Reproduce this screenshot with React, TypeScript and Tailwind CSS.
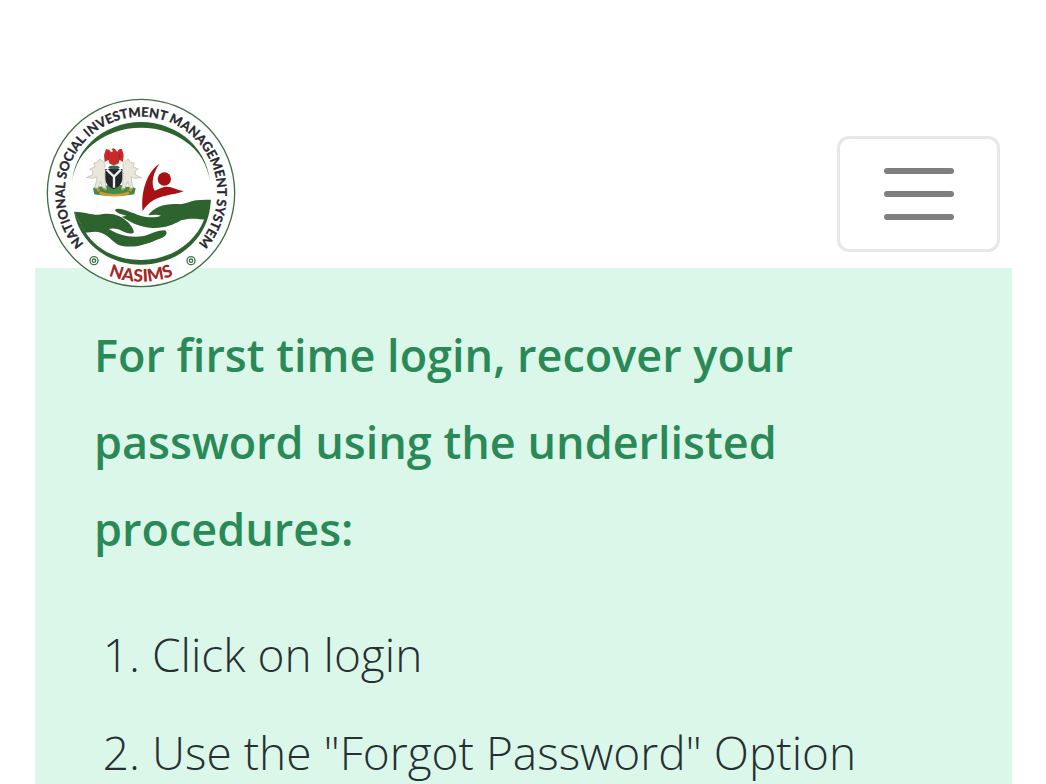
const steps: string[] = ['Click on login', 'Use the "Forgot Password" Option']

function NasimsLogo() {
  return (
    <svg
      className="block h-[190px] w-[190px]"
      viewBox="19 25 570 570"
      role="img"
      aria-label="National Social Investment Management System"
    >
      <defs>
        <path id="ring-top" d="M142 472 A229 229 0 1 1 466 472" />
        <path id="ring-bottom" d="M110 492 A266 266 0 0 0 498 492" />
      </defs>

      <circle cx="304" cy="310" r="281" fill="#fff" stroke="#3f6f45" strokeWidth="4" />

      {/* Ring lettering */}
      <text
        className="font-[Lato,sans-serif] text-[39px] font-bold"
        fill="#26282f"
        stroke="#26282f"
        strokeWidth="1"
        textAnchor="middle"
      >
        <textPath href="#ring-top" startOffset="50%">
          NATIONAL SOCIAL INVESTMENT MANAGEMENT SYSTEM
        </textPath>
      </text>
      <text
        className="font-[Lato,sans-serif] text-[52px] font-black"
        fill="#a5281f"
        textAnchor="middle"
      >
        <textPath href="#ring-bottom" startOffset="50%">
          NASIMS
        </textPath>
      </text>
      <g fill="none" stroke="#41744a" strokeWidth="4">
        <circle cx="163" cy="513" r="12" />
        <circle cx="163" cy="513" r="5" />
        <circle cx="454" cy="513" r="12" />
        <circle cx="454" cy="513" r="5" />
      </g>

      {/* Inner crescents */}
      <g fill="#2c632e">
        <path d="M97 290 A207 193 0 0 1 511 290 A207 176 0 0 0 97 290Z" />
        <path d="M103 367 L137 427 C170 480 230 511 304 511 C390 511 465 462 493 390 L513 330 C512 440 420 525 304 525 C205 525 120 460 103 367Z" />
      </g>

      {/* Hands */}
      <g fill="#2c632e">
        <path d="M103 366 C140 367 165 380 190 373 C222 369 244 379 258 392 C272 403 281 416 283 428 C276 437 254 428 236 419 C226 416 217 415 207 418 C234 435 272 446 312 439 C335 433 356 421 376 422 C388 430 376 443 358 448 C328 460 300 474 252 470 C222 466 212 438 184 429 C164 423 150 429 137 429Z" />
        <path d="M226 360 C238 352 268 366 293 375 C320 384 344 386 364 378 C352 374 340 376 326 377 C340 352 378 341 412 343 C432 345 444 339 455 335 C473 329 492 331 514 330 L501 391 C478 387 446 384 424 392 C398 408 366 418 330 414 C292 410 268 394 246 381 C253 380 257 379 260 378 C246 373 228 370 226 360Z" />
      </g>

      {/* Figure */}
      <g fill="#a81114">
        <path d="M360 222 C326 242 302 300 309 364 C325 338 350 323 378 318 C398 313 418 312 433 304 C414 302 390 287 374 292 C363 295 355 299 345 303 C333 282 340 248 360 222Z" />
        <circle cx="374" cy="268" r="20" />
      </g>

      {/* Coat of arms */}
      <path d="M160 296 C174 284 190 297 204 286 L246 286 C262 296 272 286 288 296 L284 314 C250 321 196 321 164 314Z" fill="#3f8d45" />
      <path d="M182 305 C205 316 244 316 266 305 L270 313 C246 323 202 323 178 313Z" fill="#d29a35" />
      <g fill="#d58a32">
        <circle cx="176" cy="301" r="5" />
        <circle cx="198" cy="299" r="4" />
        <circle cx="248" cy="299" r="4" />
        <circle cx="272" cy="301" r="5" />
      </g>
      <g fill="#e9e6da" stroke="#bdb9a8" strokeWidth="2">
        <path d="M180 208 L190 215 C198 220 198 232 193 237 L204 246 L194 250 C200 266 194 280 200 296 L190 296 L182 276 L175 296 L166 296 L172 262 L160 266 L140 264 L158 256 L160 244 L150 238 L166 232 L162 220 L173 218Z" />
        <path d="M266 208 L256 215 C248 220 248 232 253 237 L242 246 L252 250 C246 266 252 280 246 296 L256 296 L264 276 L271 296 L280 296 L274 262 L286 266 L306 264 L288 256 L286 244 L296 238 L280 232 L284 220 L273 218Z" />
      </g>
      <path d="M197 238 H248 V264 C248 284 237 290 222 299 C207 290 197 284 197 264Z" fill="#23262a" />
      <path d="M201 240 L223 261 L244 240 M223 261 V294" fill="none" stroke="#f1f1ec" strokeWidth="7" />
      <path d="M206 234 C206 225 240 225 240 234 L234 239 H212Z" fill="#35694a" />
      <path d="M216 178 C221 175 227 177 229 182 L232 187 L238 179 L247 178 L252 196 L250 217 L240 211 L236 222 L222 227 L210 222 L206 211 L195 217 L193 196 L199 178 L208 180 L215 188 L220 185Z" fill="#c82a2a" />
      <path d="M204 190 L207 208 M241 190 L238 208" stroke="#8f1d20" strokeWidth="2" />
    </svg>
  )
}

function Navbar() {
  return (
    <header className="relative flex items-start justify-between bg-white px-[46px] pt-[98px]">
      <a href="#" className="-mb-5 block">
        <NasimsLogo />
      </a>
      <button
        type="button"
        aria-label="Toggle navigation"
        className="mt-[38px] flex h-[116px] w-[163px] items-center justify-center rounded-xl border-3 border-[#e7e7e7]"
      >
        <svg className="h-[54px] w-[72px]" viewBox="0 0 72 54" aria-hidden="true">
          <path
            d="M4 4H68M4 27H68M4 50H68"
            stroke="#7f7f7f"
            strokeWidth="6"
            strokeLinecap="round"
          />
        </svg>
      </button>
    </header>
  )
}

export default function App() {
  return (
    <div className="flex min-h-screen flex-col bg-white font-['Open_Sans',sans-serif]">
      <Navbar />
      <main className="mr-[34px] ml-[35px] flex-1 bg-[#dbf7e9] px-[59px] pt-[43px] leading-[87px]">
        <h1 className="text-[45px] font-semibold text-[#2a8a57]">
          For first time login, recover your password using the underlisted procedures:
        </h1>
        <ol className="mt-[39px] list-decimal space-y-[11px] pl-[58px] text-[46px] font-light text-[#263033]">
          {steps.map((step) => (
            <li key={step}>{step}</li>
          ))}
        </ol>
      </main>
    </div>
  )
}
